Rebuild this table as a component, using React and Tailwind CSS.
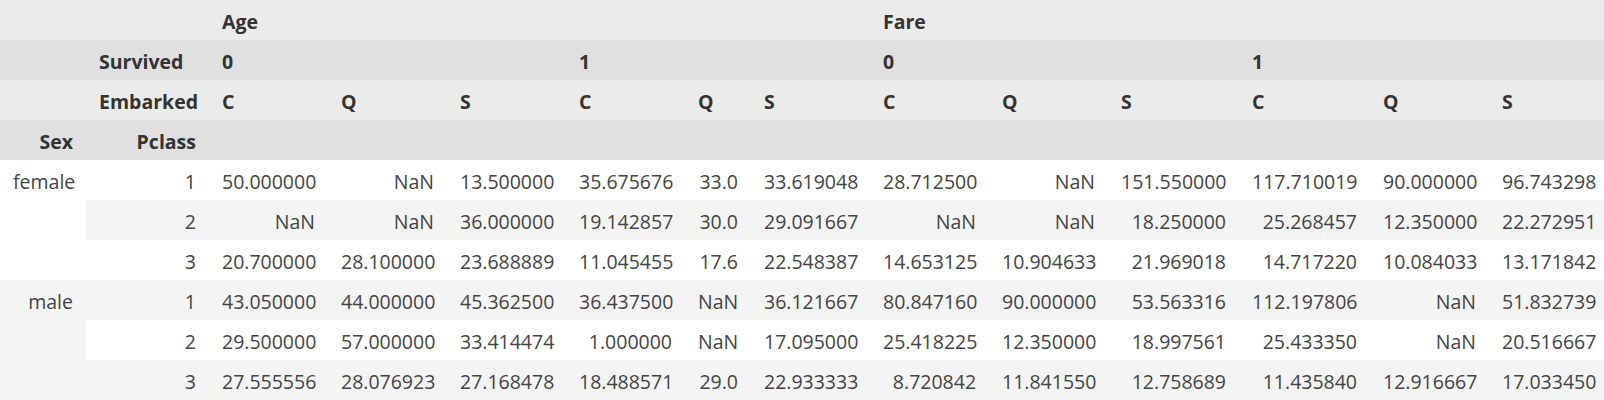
import React from "react";

const widths = [
  "w-[86px]", "w-[123px]", "w-[119px]", "w-[119px]", "w-[119px]", "w-[119px]", "w-[66px]",
  "w-[119px]", "w-[119px]", "w-[119px]", "w-[131px]", "w-[131px]", "w-[119px]", "w-[119px]",
];

const embarked = ["C", "Q", "S", "C", "Q", "S", "C", "Q", "S", "C", "Q", "S"];

const rows = [
  { sex: "female", p: "1", v: ["50.000000", "NaN", "13.500000", "35.675676", "33.0", "33.619048", "28.712500", "NaN", "151.550000", "117.710019", "90.000000", "96.743298"] },
  { p: "2", v: ["NaN", "NaN", "36.000000", "19.142857", "30.0", "29.091667", "NaN", "NaN", "18.250000", "25.268457", "12.350000", "22.272951"] },
  { p: "3", v: ["20.700000", "28.100000", "23.688889", "11.045455", "17.6", "22.548387", "14.653125", "10.904633", "21.969018", "14.717220", "10.084033", "13.171842"] },
  { sex: "male", p: "1", v: ["43.050000", "44.000000", "45.362500", "36.437500", "NaN", "36.121667", "80.847160", "90.000000", "53.563316", "112.197806", "NaN", "51.832739"] },
  { p: "2", v: ["29.500000", "57.000000", "33.414474", "1.000000", "NaN", "17.095000", "25.418225", "12.350000", "18.997561", "25.433350", "NaN", "20.516667"] },
  { p: "3", v: ["27.555556", "28.076923", "27.168478", "18.488571", "29.0", "22.933333", "8.720842", "11.841550", "12.758689", "11.435840", "12.916667", "17.033450"] },
];

const hcell = "px-[13px] pt-[3px] pb-0 leading-[37px] h-10 font-bold text-left whitespace-nowrap text-[#333333]";
const dcell = "px-[13px] pt-[3px] pb-0 leading-[37px] h-10 font-normal text-right whitespace-nowrap text-[#444444]";

export default function App() {
  return (
    <div className="w-full overflow-hidden bg-white" style={{ fontFamily: '"Open Sans", "Noto Sans", sans-serif' }}>
      <table className="table-fixed border-collapse w-[1608px] text-[19.5px]">
        <colgroup>
          {widths.map((w, i) => (
            <col key={i} className={w} />
          ))}
        </colgroup>
        <thead>
          <tr className="bg-[#ebebeb]">
            <th className={hcell}></th>
            <th className={hcell}></th>
            <th className={hcell} colSpan={6}>Age</th>
            <th className={hcell} colSpan={6}>Fare</th>
          </tr>
          <tr className="bg-[#e0e0e0]">
            <th className={hcell}></th>
            <th className={hcell}>Survived</th>
            <th className={hcell} colSpan={3}>0</th>
            <th className={hcell} colSpan={3}>1</th>
            <th className={hcell} colSpan={3}>0</th>
            <th className={hcell} colSpan={3}>1</th>
          </tr>
          <tr className="bg-[#ebebeb]">
            <th className={hcell}></th>
            <th className={hcell}>Embarked</th>
            {embarked.map((e, i) => (
              <th key={i} className={hcell}>{e}</th>
            ))}
          </tr>
          <tr className="bg-[#e0e0e0]">
            <th className={hcell + " !text-right"}>Sex</th>
            <th className={hcell + " !text-right"}>Pclass</th>
            {embarked.map((e, i) => (
              <th key={i} className={hcell}></th>
            ))}
          </tr>
        </thead>
        <tbody>
          {rows.map((r, ri) => (
            <tr key={ri} className={ri % 2 === 1 ? "bg-[#f4f4f4]" : "bg-white"}>
              {r.sex && (
                <th rowSpan={3} className={dcell + " align-top"}>{r.sex}</th>
              )}
              <th className={dcell}>{r.p}</th>
              {r.v.map((v, vi) => (
                <td key={vi} className={dcell}>{v}</td>
              ))}
            </tr>
          ))}
        </tbody>
      </table>
    </div>
  );
}
